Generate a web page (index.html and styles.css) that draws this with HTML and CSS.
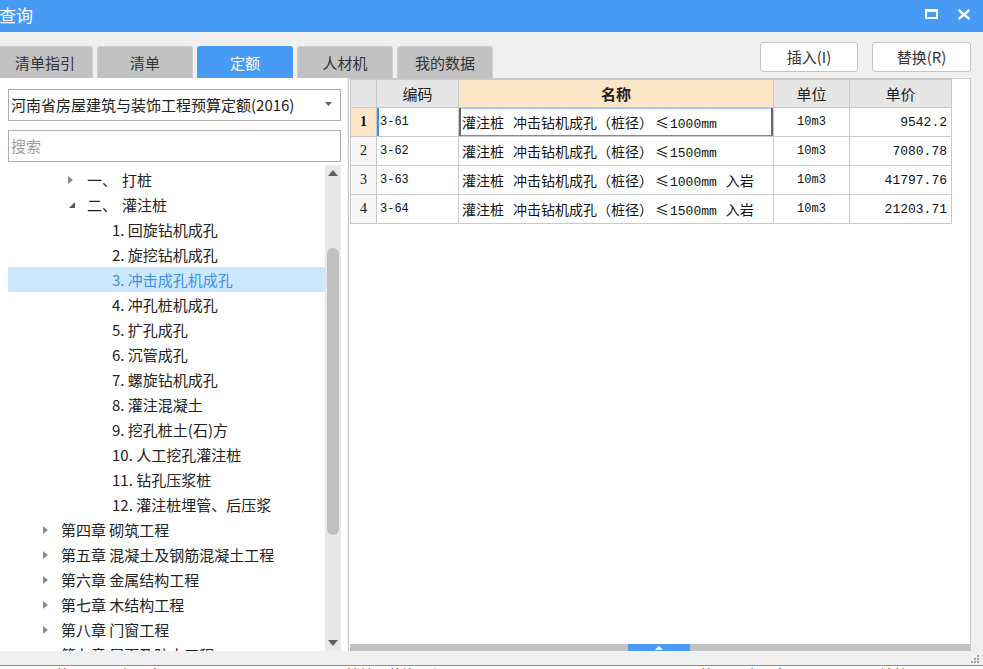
FILE: index.html
```html
<!DOCTYPE html>
<html lang="zh">
<head>
<meta charset="utf-8">
<title>查询</title>
<link rel="stylesheet" href="styles.css">
</head>
<body>
<div class="window">
  <div class="titlebar">
    <span class="title">查询</span>
    <div class="winbtns">
      <svg class="maxbtn" width="13" height="10" viewBox="0 0 13 10"><rect x="1" y="1.5" width="11" height="7.5" fill="none" stroke="#fff" stroke-width="2"/><rect x="0" y="0" width="13" height="3" fill="#fff"/></svg>
      <svg class="closebtn" width="14" height="11" viewBox="0 0 14 11"><path d="M1.5 0.8 L12.5 10.2 M12.5 0.8 L1.5 10.2" stroke="#fff" stroke-width="2.4" fill="none"/></svg>
    </div>
  </div>

  <div class="toolbar">
    <div class="tabs">
      <div class="tab first">清单指引</div>
      <div class="tab">清单</div>
      <div class="tab active">定额</div>
      <div class="tab">人材机</div>
      <div class="tab">我的数据</div>
    </div>
    <div class="actions">
      <button class="btn">插入(I)</button>
      <button class="btn">替换(R)</button>
    </div>
  </div>

  <div class="main">
    <div class="left">
      <div class="select">
        <span class="select-text">河南省房屋建筑与装饰工程预算定额(2016)</span>
        <svg class="caret" width="7" height="4" viewBox="0 0 7 4"><path d="M0 0 H7 L3.5 4 Z" fill="#666"/></svg>
      </div>
      <div class="search">搜索</div>
      <div class="tree">
        <div class="tree-list">
          <div class="row lv1"><span class="arr closed"></span><span>一、</span><span class="gap">打桩</span></div>
          <div class="row lv1"><span class="arr open"></span><span>二、</span><span class="gap">灌注桩</span></div>
          <div class="row lv2">1. 回旋钻机成孔</div>
          <div class="row lv2">2. 旋挖钻机成孔</div>
          <div class="row lv2 sel">3. 冲击成孔机成孔</div>
          <div class="row lv2">4. 冲孔桩机成孔</div>
          <div class="row lv2">5. 扩孔成孔</div>
          <div class="row lv2">6. 沉管成孔</div>
          <div class="row lv2">7. 螺旋钻机成孔</div>
          <div class="row lv2">8. 灌注混凝土</div>
          <div class="row lv2">9. 挖孔桩土(石)方</div>
          <div class="row lv2">10. 人工挖孔灌注桩</div>
          <div class="row lv2">11. 钻孔压浆桩</div>
          <div class="row lv2">12. 灌注桩埋管、后压浆</div>
          <div class="row lv0"><span class="arr closed"></span>第四章 砌筑工程</div>
          <div class="row lv0"><span class="arr closed"></span>第五章 混凝土及钢筋混凝土工程</div>
          <div class="row lv0"><span class="arr closed"></span>第六章 金属结构工程</div>
          <div class="row lv0"><span class="arr closed"></span>第七章 木结构工程</div>
          <div class="row lv0"><span class="arr closed"></span>第八章 门窗工程</div>
          <div class="row lv0"><span class="arr closed"></span>第九章 屋面及防水工程</div>
        </div>
        <div class="vscroll">
          <svg class="vs-up" width="10" height="6" viewBox="0 0 10 6"><path d="M0 6 L5 0 L10 6 Z" fill="#606060"/></svg>
          <div class="vs-track"><div class="vs-thumb"></div></div>
          <svg class="vs-down" width="10" height="6" viewBox="0 0 10 6"><path d="M0 0 L5 6 L10 0 Z" fill="#606060"/></svg>
        </div>
      </div>
    </div>

    <div class="right">
      <div class="grid-area">
        <table class="grid">
          <colgroup>
            <col class="c-no"><col class="c-code"><col class="c-name"><col class="c-unit"><col class="c-price">
          </colgroup>
          <thead>
            <tr><th class="corner"></th><th>编码</th><th class="hl">名称</th><th>单位</th><th>单价</th></tr>
          </thead>
          <tbody>
            <tr class="cur">
              <td class="no">1</td>
              <td class="code">3-61</td>
              <td class="name">灌注桩<span class="sp">冲击钻机成孔（桩径）</span><span class="le">≤</span><span class="m">1000mm</span></td>
              <td class="unit">10m3</td>
              <td class="price">9542.2</td>
            </tr>
            <tr>
              <td class="no">2</td>
              <td class="code">3-62</td>
              <td class="name">灌注桩<span class="sp">冲击钻机成孔（桩径）</span><span class="le">≤</span><span class="m">1500mm</span></td>
              <td class="unit">10m3</td>
              <td class="price">7080.78</td>
            </tr>
            <tr>
              <td class="no">3</td>
              <td class="code">3-63</td>
              <td class="name">灌注桩<span class="sp">冲击钻机成孔（桩径）</span><span class="le">≤</span><span class="m">1000mm</span><span class="sp">入岩</span></td>
              <td class="unit">10m3</td>
              <td class="price">41797.76</td>
            </tr>
            <tr>
              <td class="no">4</td>
              <td class="code">3-64</td>
              <td class="name">灌注桩<span class="sp">冲击钻机成孔（桩径）</span><span class="le">≤</span><span class="m">1500mm</span><span class="sp">入岩</span></td>
              <td class="unit">10m3</td>
              <td class="price">21203.71</td>
            </tr>
          </tbody>
        </table>
      </div>
      <div class="hscroll">
        <div class="hthumb"><svg width="8" height="4" viewBox="0 0 8 4"><path d="M0 4 L4 0 L8 4 Z" fill="#fff"/></svg></div>
      </div>
    </div>
  </div>

  <div class="status">
    <svg class="grip" width="10" height="10" viewBox="0 0 10 10">
      <rect x="7" y="1" width="2" height="2" fill="#a0a0a0"/>
      <rect x="4" y="4" width="2" height="2" fill="#a0a0a0"/>
      <rect x="7" y="4" width="2" height="2" fill="#a0a0a0"/>
      <rect x="1" y="7" width="2" height="2" fill="#a0a0a0"/>
      <rect x="4" y="7" width="2" height="2" fill="#a0a0a0"/>
      <rect x="7" y="7" width="2" height="2" fill="#a0a0a0"/>
    </svg>
  </div>
  <div class="footer">
    <span class="frag f1">第</span><span class="frag f2">十</span><span class="frag f3">章</span><span class="frag f4">楼地面装饰工程</span><span class="frag f5">第</span><span class="frag f6">十一章</span><span class="frag f7">墙柱面</span>
  </div>
</div>
</body>
</html>
```

FILE: styles.css
```css
* { box-sizing: border-box; }

html, body {
  margin: 0;
  padding: 0;
}

body {
  width: 983px;
  height: 669px;
  overflow: hidden;
  background: #f0f0f0;
  font-family: "Noto Sans CJK SC", "Noto Sans", sans-serif;
  color: #222;
}

.window {
  display: flex;
  flex-direction: column;
  width: 983px;
  height: 669px;
}

/* title bar */
.titlebar {
  height: 32px;
  flex: none;
  background: #479bf5;
  display: flex;
  align-items: center;
  justify-content: space-between;
}

.title {
  color: #fff;
  font-size: 17px;
  line-height: 32px;
  margin-left: -1px;
  margin-top: -2px;
}

.winbtns {
  display: flex;
  align-items: center;
  margin-right: 12px;
  margin-top: -4px;
}

.maxbtn { margin-right: 19px; }

/* toolbar with tabs */
.toolbar {
  height: 46px;
  flex: none;
  display: flex;
  justify-content: space-between;
}

.tabs {
  display: flex;
  align-items: flex-end;
  gap: 4px;
  margin-left: -3px;
}

.tab {
  width: 96px;
  height: 32px;
  background: #c2c2c2;
  border: 1px solid #cdcdcd;
  border-bottom: none;
  border-radius: 3px 3px 0 0;
  font-size: 15px;
  line-height: 31px;
  text-align: center;
  color: #333;
}

.tab.active {
  background: #479bf5;
  border-color: #479bf5;
  color: #fff;
}

.actions {
  display: flex;
  gap: 14px;
  padding-top: 10px;
  margin-right: 12px;
}

.btn {
  width: 98px;
  height: 30px;
  background: #fff;
  border: 1px solid #c4c4c4;
  border-radius: 3px;
  font-family: "Noto Sans CJK SC", "Noto Sans", sans-serif;
  font-size: 15px;
  color: #333;
  padding: 0;
  line-height: 28px;
}

.btn + .btn { width: 99px; }

/* main area */
.main {
  height: 573px;
  flex: none;
  display: flex;
}

.left {
  width: 347px;
  flex: none;
  background: #fff;
  padding: 11px 6px 0 8px;
  display: flex;
  flex-direction: column;
}

.select {
  height: 32px;
  border: 1px solid #adadad;
  display: flex;
  align-items: center;
  justify-content: space-between;
  padding: 0 8px 0 2px;
  flex: none;
}

.select-text {
  font-size: 15px;
  color: #222;
  line-height: 30px;
}

.caret { margin-bottom: 2px; }

.search {
  margin-top: 9px;
  height: 32px;
  border: 1px solid #adadad;
  font-size: 15px;
  color: #9c9c9c;
  line-height: 30px;
  padding-left: 2px;
  flex: none;
}

.tree {
  margin-top: 3px;
  flex: 1;
  display: flex;
  overflow: hidden;
  min-height: 0;
}

.tree-list {
  flex: 1;
  padding-top: 2px;
  overflow: hidden;
}

.row {
  height: 25px;
  display: flex;
  align-items: center;
  font-size: 15px;
  line-height: 24px;
  color: #222;
  white-space: nowrap;
}

.row.lv0 { padding-left: 35px; }
.row.lv1 { padding-left: 60px; }
.row.lv2 { padding-left: 104px; }

.row.sel {
  background: #cce8ff;
  color: #3d8fe6;
}

.row .gap { margin-left: 5px; }

.arr {
  display: inline-block;
  flex: none;
  position: relative;
}

.lv0 .arr { width: 18px; }
.lv1 .arr { width: 19px; }

.arr.closed::before {
  content: "";
  position: absolute;
  left: 0;
  top: -4px;
  border-left: 5px solid #8a8a8a;
  border-top: 4px solid transparent;
  border-bottom: 4px solid transparent;
}

.arr.open::before {
  content: "";
  position: absolute;
  left: 1px;
  top: -3px;
  border-right: 6px solid #595959;
  border-top: 6px solid transparent;
}

.vscroll {
  width: 16px;
  flex: none;
  background: #e8e8e8;
  display: flex;
  flex-direction: column;
  align-items: center;
}

.vs-up { margin-top: 5px; flex: none; }
.vs-down { margin-bottom: 5px; flex: none; }

.vs-track {
  flex: 1;
  width: 100%;
  display: flex;
  justify-content: center;
  padding-top: 72px;
}

.vs-thumb {
  width: 12px;
  height: 287px;
  background: #c0c0c0;
  border-radius: 6px;
}

.right {
  flex: 1;
  margin-left: 1px;
  margin-right: 12px;
  background: #fff;
  border: 1px solid #c8c8c8;
  border-bottom: none;
  display: flex;
  flex-direction: column;
}

.grid-area {
  flex: 1;
  padding-left: 1px;
}

.grid {
  border-collapse: collapse;
  table-layout: fixed;
  width: 601px;
}

.c-no { width: 26px; }
.c-code { width: 82px; }
.c-name { width: 315px; }
.c-unit { width: 76px; }
.c-price { width: 102px; }

.grid th, .grid td {
  border: 1px solid #c9c9c9;
  padding: 0;
  white-space: nowrap;
  overflow: hidden;
}

.grid th {
  height: 28px;
  background: #e6e6e6;
  font-size: 15px;
  font-weight: normal;
  color: #222;
  text-align: center;
  line-height: 26px;
}

.grid th.hl {
  background: #fde5c8;
  font-weight: bold;
}

.grid td {
  height: 29px;
  color: #111;
}

.grid td.no {
  font-family: "Liberation Serif", serif;
  font-size: 14px;
  text-align: center;
  background: #f7f7f7;
}

.grid tr.cur td.no {
  background: #fde5c8;
  font-weight: bold;
}

.grid td.code {
  font-family: "Liberation Mono", monospace;
  font-size: 12px;
  padding-left: 3px;
}

.grid tr.cur td.code {
  box-shadow: inset 2px 0 0 #3a8ff2;
}

.grid td.name {
  font-size: 14px;
  padding-left: 3px;
}

.grid tr.cur td.name {
  box-shadow: inset 2px 0 0 #6a6a6a, inset -2px 0 0 #6a6a6a, inset 0 -1px 0 #8a8a8a, inset 0 1px 0 #9fc6ef;
}

.sp { margin-left: 9px; }

.le {
  margin-left: 2px;
  font-size: 14px;
}

.m {
  font-family: "Liberation Mono", monospace;
  font-size: 13px;
  margin-left: 1px;
}

.grid td.unit {
  font-family: "Liberation Mono", monospace;
  font-size: 12px;
  text-align: center;
}

.grid td.price {
  font-family: "Liberation Mono", monospace;
  font-size: 13px;
  text-align: right;
  padding-right: 4px;
}

.hscroll {
  height: 7px;
  flex: none;
  margin-left: 1px;
  background: #c2c2c2;
  position: relative;
}

.hthumb {
  position: absolute;
  left: 278px;
  top: 0;
  width: 62px;
  height: 7px;
  background: #479bf5;
  display: flex;
  justify-content: center;
  align-items: center;
}

.status {
  height: 14px;
  flex: none;
  display: flex;
  justify-content: flex-end;
  align-items: flex-end;
  padding-right: 3px;
}

.grip { margin-bottom: 1px; }

.footer {
  height: 4px;
  flex: none;
  border-top: 1px solid #8c8c8c;
  background: #fff;
  overflow: hidden;
  position: relative;
  font-size: 14px;
  line-height: 14px;
}

.frag {
  position: absolute;
  top: 1px;
  color: #222;
}

.f1 { left: 56px; }
.f2 { left: 118px; }
.f3 { left: 148px; }
.f4 { left: 346px; }
.f5 { left: 700px; }
.f6 { left: 745px; }
.f7 { left: 880px; }
```
